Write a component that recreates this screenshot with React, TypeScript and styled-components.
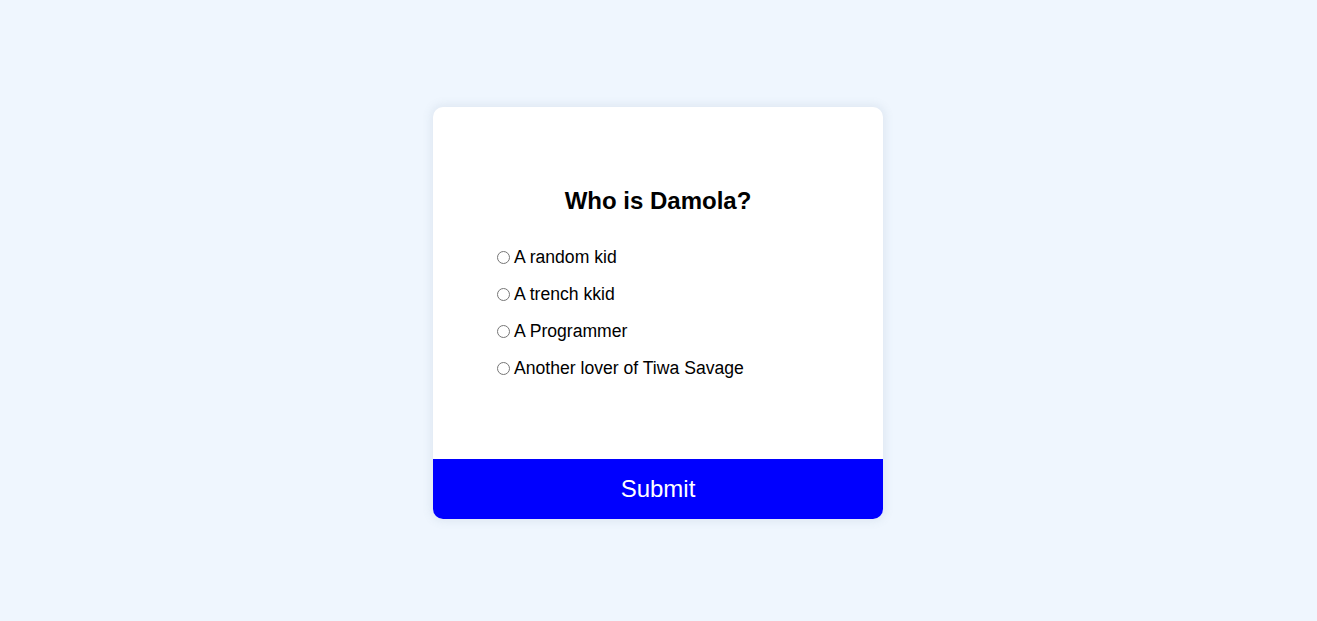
import React from "react";
import styled, { createGlobalStyle } from "styled-components";

const Global = createGlobalStyle`
  html, body { margin: 0; padding: 0; }
  body {
    background: #eff6fe;
    font-family: "Liberation Sans", Arial, sans-serif;
    min-height: 621px;
  }
`;

const Page = styled.main`
  display: flex;
  justify-content: center;
  padding-top: 107px;
  padding-right: 1px;
`;

const Card = styled.section`
  width: 450px;
  background: #ffffff;
  border-radius: 10px;
  box-shadow: 0 0 10px 2px rgba(100, 120, 150, 0.12);
  overflow: hidden;
`;

const Header = styled.div`
  padding: 64px 64px 80px 64px;
`;

const Title = styled.h2`
  margin: 0;
  padding: 16px;
  text-align: center;
  font-size: 24px;
  line-height: 28px;
  font-weight: 700;
  color: #000;
`;

const List = styled.ul`
  list-style: none;
  margin: 0;
  padding: 0;
  display: flex;
  flex-direction: column;
  gap: 16px;
  padding-top: 16px;
`;

const Item = styled.li`
  display: flex;
  align-items: center;
  height: 21px;
  font-size: 17.6px;
  line-height: 21px;
  color: #000;
`;

const Radio = styled.input`
  width: 13px;
  height: 13px;
  margin: 0 4px 0 0;
`;

const Label = styled.label`
  cursor: pointer;
`;

const SubmitButton = styled.button`
  display: block;
  width: 100%;
  height: 60px;
  border: none;
  background: #0000ff;
  color: #ffffff;
  font-family: "Liberation Sans", Arial, sans-serif;
  font-size: 24px;
  cursor: pointer;
`;

const options = [
  { id: "a", text: "A random kid" },
  { id: "b", text: "A trench kkid" },
  { id: "c", text: "A Programmer" },
  { id: "d", text: "Another lover of Tiwa Savage" },
];

export default function App() {
  return (
    <>
      <Global />
      <Page>
        <Card>
          <Header>
            <Title>Who is Damola?</Title>
            <List>
              {options.map((o) => (
                <Item key={o.id}>
                  <Radio type="radio" name="answer" id={o.id} />
                  <Label htmlFor={o.id}>{o.text}</Label>
                </Item>
              ))}
            </List>
          </Header>
          <SubmitButton>Submit</SubmitButton>
        </Card>
      </Page>
    </>
  );
}
